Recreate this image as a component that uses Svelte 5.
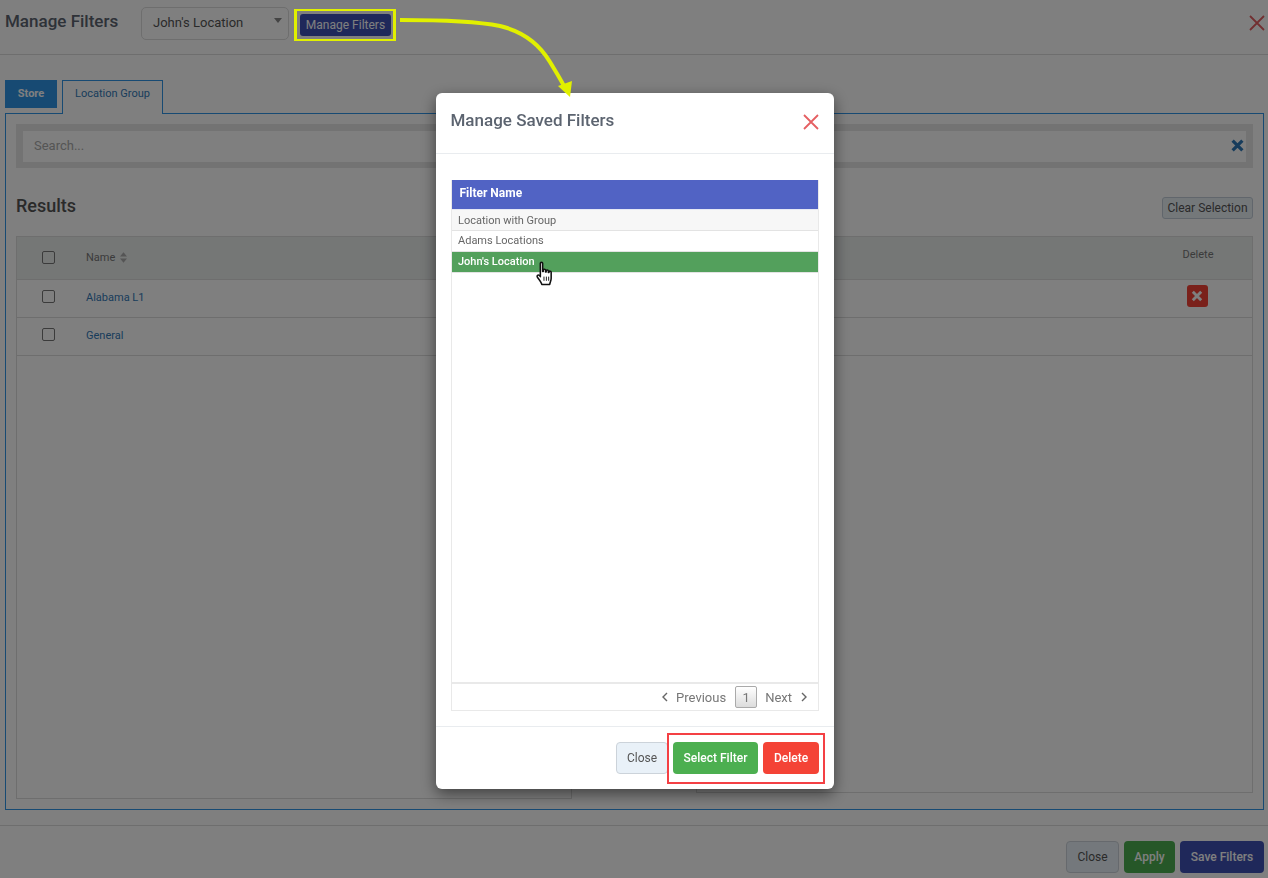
<script>
	const rows = [
		{ name: 'Alabama L1', canDelete: true },
		{ name: 'General', canDelete: false }
	];
	const filters = ['Location with Group', 'Adams Locations', "John's Location"];
	const selected = "John's Location";
</script>

<div class="page">
	<header class="top">
		<h1>Manage Filters</h1>
		<div class="select">
			<span>John's Location</span>
			<i class="caret"></i>
		</div>
		<button class="btn navy small">Manage Filters</button>
		<svg class="top-close" viewBox="0 0 16 16"><path d="M1 1L15 15M15 1L1 15" /></svg>
	</header>

	<main class="content">
		<div class="tabs">
			<div class="tab store">Store</div>
			<div class="tab active">Location Group</div>
		</div>
		<section class="panel">
			<div class="search-wrap">
				<div class="search">
					<span>Search...</span>
					<svg viewBox="0 0 12 12"><path d="M1.5 1.5L10.5 10.5M10.5 1.5L1.5 10.5" /></svg>
				</div>
			</div>
			<div class="results-head">
				<h2>Results</h2>
				<button class="clear">Clear Selection</button>
			</div>
			<div class="table">
				<div class="row head">
					<div class="check"><i class="box"></i></div>
					<div class="name">
						Name
						<svg class="sort" viewBox="0 0 8 12"><path d="M4 0L8 4.8H0zM4 12L0 7.2H8z" /></svg>
					</div>
					<div class="del">Delete</div>
				</div>
				{#each rows as row}
					<div class="row">
						<div class="check"><i class="box"></i></div>
						<div class="name link">{row.name}</div>
						<div class="del">
							{#if row.canDelete}
								<span class="del-btn">
									<svg viewBox="0 0 10 10"><path d="M1.5 1.5L8.5 8.5M8.5 1.5L1.5 8.5" /></svg>
								</span>
							{/if}
						</div>
					</div>
				{/each}
				<div class="table-foot">
					<div class="pane-left"></div>
					<div class="pane-right"></div>
				</div>
			</div>
		</section>
	</main>

	<footer class="bottom">
		<button class="btn light">Close</button>
		<button class="btn green">Apply</button>
		<button class="btn navy wide">Save Filters</button>
	</footer>
</div>

<div class="backdrop"></div>

<div class="modal">
	<div class="modal-head">
		<h3>Manage Saved Filters</h3>
		<svg viewBox="0 0 16 16"><path d="M1 1L15 15M15 1L1 15" /></svg>
	</div>
	<div class="modal-body">
		<div class="list">
			<div class="list-head">Filter Name</div>
			<div class="list-rows">
				{#each filters as f, i}
					<div class="item" class:odd={i === 0} class:sel={f === selected}>{f}</div>
				{/each}
			</div>
			<div class="pager">
				<svg viewBox="0 0 6 10"><path d="M5 1L1 5L5 9" /></svg>
				<span class="prev">Previous</span>
				<span class="num">1</span>
				<span class="next">Next</span>
				<svg viewBox="0 0 6 10"><path d="M1 1L5 5L1 9" /></svg>
			</div>
		</div>
	</div>
	<div class="modal-foot">
		<button class="btn pale">Close</button>
		<button class="btn green select-filter">Select Filter</button>
		<button class="btn red">Delete</button>
	</div>
</div>

<!-- annotations drawn over the screenshot -->
<div class="mark yellow"></div>
<div class="mark redbox"></div>
<svg class="arrow" viewBox="0 0 1268 878">
	<path d="M400 20C440 20 475 21 500 26C525 32 540 45 550 62C556 72 560 78 565 88" fill="none" stroke="#e1f000" stroke-width="4" />
	<path d="M558 86L572 81L570 97Z" fill="#e1f000" />
</svg>
<svg class="hand" viewBox="0 0 18 24">
	<path d="M5 2.2C5 1 7.2 1 7.2 2.2V10L7.8 10V8.6C8 7.6 9.9 7.6 10 8.8V10.6L10.6 10.6V9.4C10.8 8.4 12.6 8.4 12.7 9.6V11L13.3 11V10.4C13.5 9.4 15.4 9.6 15.4 10.8V16.5C15.4 19 14.4 20 14 22.5H6.4C6 20.4 4.4 18.4 2.2 15.6C1.2 14 2.8 12.6 4.2 14L5 15Z" fill="#fff" stroke="#111" stroke-width="1.5" stroke-linejoin="round" />
	<path d="M8.5 15V19M10.8 15V19M13 15V19" stroke="#111" stroke-width="0.9" fill="none" />
</svg>

<style>
	:global(body) {
		margin: 0;
		background: #fff;
		font-family: Roboto, 'Liberation Sans', sans-serif;
	}

	.page {
		width: 1268px;
		height: 878px;
		display: flex;
		flex-direction: column;
		overflow: hidden;
		color: #333;
	}

	.top {
		height: 54px;
		flex: none;
		display: flex;
		align-items: flex-start;
		border-bottom: 1px solid #dcdcdc;
		padding-left: 5px;
		box-sizing: content-box;
		position: relative;
	}

	h1 {
		margin: 11px 23px 0 0;
		width: 113px;
		font-size: 17px;
		line-height: 20px;
		font-weight: 500;
		color: #5c6470;
		white-space: nowrap;
	}

	.select {
		width: 148px;
		height: 33px;
		margin-top: 7px;
		box-sizing: border-box;
		border: 1px solid #dcdcdc;
		border-radius: 5px;
		display: flex;
		align-items: center;
		justify-content: space-between;
		padding: 0 5px 2px 11px;
		font-size: 13px;
		color: #555;
	}

	.caret {
		width: 0;
		height: 0;
		border-left: 4px solid transparent;
		border-right: 4px solid transparent;
		border-top: 5px solid #888;
		margin-right: 1px;
		margin-bottom: 5px;
	}

	.btn {
		font-family: inherit;
		font-size: 12px;
		font-weight: 500;
		border-radius: 4px;
		border: 1px solid transparent;
		box-sizing: border-box;
		height: 32px;
		padding: 0;
		color: #fff;
	}

	.btn.small {
		width: 91px;
		height: 22px;
		margin: 14px 0 0 11px;
		font-weight: 400;
		border-radius: 3px;
	}

	.navy {
		background: #3f51b5;
	}

	.top-close {
		position: absolute;
		right: 3px;
		top: 15px;
		width: 16px;
		height: 16px;
	}

	.top-close path,
	.modal-head path {
		fill: none;
		stroke: #e55f62;
		stroke-width: 1.8;
	}

	.content {
		flex: none;
		height: 755px;
		padding: 25px 4px 0 5px;
		box-sizing: border-box;
		display: flex;
		flex-direction: column;
	}

	.tabs {
		display: flex;
		gap: 5px;
		height: 33px;
		flex: none;
	}

	.tab {
		font-size: 11px;
		font-weight: 500;
		display: flex;
		align-items: center;
		justify-content: center;
		box-sizing: border-box;
	}

	.tab.store {
		width: 52px;
		height: 28px;
		background: #2f94e6;
		color: #fff;
		font-weight: 700;
		padding-bottom: 1px;
	}

	/* sits over the panel's top border so the tab opens into it */
	.tab.active {
		width: 101px;
		height: 34px;
		background: #fff;
		color: #337ab7;
		border: 1px solid #2f94e6;
		border-bottom: 0;
		padding-bottom: 8px;
		font-weight: 400;
		position: relative;
	}

	.panel {
		flex: none;
		height: 697px;
		box-sizing: border-box;
		border: 1px solid #2f94e6;
		padding: 10px 10px 10px;
		display: flex;
		flex-direction: column;
	}

	.search-wrap {
		background: #e6e6e6;
		padding: 6px 6px 5px;
		height: 44px;
		box-sizing: border-box;
		flex: none;
	}

	.search {
		height: 33px;
		box-sizing: border-box;
		background: #fff;
		border: 1px solid #e6e6e6;
		display: flex;
		align-items: center;
		justify-content: space-between;
		padding: 0 2px 2px 11px;
		font-size: 13px;
		color: #aaa;
	}

	.search svg {
		width: 13px;
		height: 13px;
	}

	.search path {
		stroke: #2f79b8;
		stroke-width: 3;
		fill: none;
	}

	.results-head {
		display: flex;
		justify-content: space-between;
		align-items: center;
		height: 68px;
		flex: none;
		padding-top: 8px;
		box-sizing: border-box;
	}

	h2 {
		margin: 0 0 2px;
		font-size: 18px;
		font-weight: 500;
		color: #555;
	}

	.clear {
		width: 91px;
		height: 22px;
		font-family: inherit;
		font-size: 12px;
		color: #555;
		background: #e9f0f5;
		border: 1px solid #c2cdd8;
		border-radius: 3px;
		padding: 0;
		margin-top: 4px;
	}

	.table {
		flex: 1;
		border-top: 1px solid #dcdcdc;
		font-size: 11px;
		display: flex;
		flex-direction: column;
	}

	.row {
		display: flex;
		align-items: center;
		height: 38px;
		flex: none;
		box-sizing: border-box;
		border: 1px solid #dcdcdc;
		border-width: 0 1px 1px;
		padding-bottom: 2px;
	}

	.row.head {
		height: 43px;
		background: #eaeeed;
		color: #777;
	}

	.check {
		width: 69px;
		padding-left: 25px;
		box-sizing: border-box;
		display: flex;
		margin-bottom: 2px;
	}

	.head .check {
		margin-bottom: 0;
	}

	.box {
		width: 13px;
		height: 13px;
		border: 1px solid #777;
		border-radius: 2px;
		background: #fff;
		box-sizing: border-box;
	}

	.head .box {
		background: transparent;
	}

	.name {
		flex: 1;
		display: flex;
		align-items: center;
		gap: 5px;
	}

	.link {
		color: #337ab7;
	}

	.sort {
		width: 7px;
		height: 11px;
		fill: #aaa;
	}

	.del {
		width: 110px;
		text-align: center;
		padding-left: 2px;
		box-sizing: border-box;
	}

	.head .del {
		padding-bottom: 5px;
	}

	.del-btn {
		display: inline-flex;
		align-items: center;
		justify-content: center;
		width: 21px;
		height: 22px;
		background: #f44336;
		border-radius: 3px;
		margin: 0 2px 4px 0;
	}

	.del-btn svg {
		width: 12px;
		height: 12px;
	}

	.del-btn path {
		stroke: #fff;
		stroke-width: 2.4;
		fill: none;
	}

	.table-foot {
		flex: 1;
		display: flex;
		justify-content: space-between;
		align-items: flex-start;
	}

	.pane-left,
	.pane-right {
		box-sizing: border-box;
		border: 1px solid #dcdcdc;
		border-top: 0;
	}

	.pane-left {
		width: 556px;
		height: 100%;
	}

	.pane-right {
		width: 557px;
		height: calc(100% - 6px);
	}

	.bottom {
		flex: none;
		height: 68px;
		display: flex;
		justify-content: flex-end;
		align-items: flex-start;
		gap: 5px;
		border-top: 1px solid #dcdcdc;
		padding: 15px 4px 0 0;
		margin-top: 15px;
		box-sizing: border-box;
	}

	.light {
		width: 53px;
		background: #e9f1f8;
		border-color: #ccd3da;
		color: #555;
		font-weight: 400;
	}

	.green {
		width: 51px;
		background: #4caf50;
	}

	.wide {
		width: 84px;
	}

	.backdrop {
		position: fixed;
		inset: 0;
		background: rgba(0, 0, 0, 0.5);
	}

	.modal {
		position: fixed;
		left: 436px;
		top: 93px;
		width: 398px;
		height: 696px;
		background: #fff;
		border-radius: 6px;
		box-shadow: 0 5px 15px rgba(0, 0, 0, 0.5);
		display: flex;
		flex-direction: column;
	}

	.modal-head {
		height: 61px;
		flex: none;
		box-sizing: border-box;
		border-bottom: 1px solid #e9ecef;
		display: flex;
		justify-content: space-between;
		padding: 17px 15px 0 14.5px;
	}

	h3 {
		margin: 0;
		font-size: 17px;
		line-height: 20px;
		font-weight: 500;
		color: #5c6470;
	}

	.modal-head svg {
		width: 16px;
		height: 16px;
		margin-top: 4px;
	}

	.modal-body {
		flex: none;
		height: 573px;
		box-sizing: border-box;
		padding: 26px 15px 15px;
		border-bottom: 1px solid #e9ecef;
	}

	.list {
		height: 100%;
		box-sizing: border-box;
		display: flex;
		flex-direction: column;
		border: 1px solid #e9e9e9;
		border-top: 0;
		font-size: 11px;
		color: #666;
	}

	.list-head {
		height: 30px;
		flex: none;
		background: #5163c4;
		color: #fff;
		font-size: 12px;
		font-weight: 700;
		display: flex;
		align-items: center;
		padding: 0 0 4px 7.5px;
		box-sizing: border-box;
		border-bottom: 1px solid #e6e8f4;
	}

	.list-rows {
		flex: 1;
	}

	.item {
		height: 21px;
		box-sizing: border-box;
		border-bottom: 1px solid #e3e3e3;
		padding-left: 6px;
		display: flex;
		align-items: center;
	}

	.item + .item {
		padding-bottom: 2px;
	}

	.item.odd {
		background: #f7f7f7;
	}

	.item.sel {
		background: #53a05c;
		color: #fff;
		font-weight: 500;
	}

	.pager {
		height: 28px;
		flex: none;
		box-sizing: border-box;
		border-top: 2px solid #e9e9e9;
		display: flex;
		align-items: center;
		justify-content: flex-end;
		padding-right: 11px;
		font-size: 13px;
		color: #777;
	}

	.pager svg {
		width: 6px;
		height: 10px;
	}

	.pager path {
		fill: none;
		stroke: #666;
		stroke-width: 1.4;
	}

	.prev {
		margin: 0 9px 0 8px;
	}

	.next {
		margin: 0 9px 0 8px;
	}

	.num {
		width: 22px;
		height: 22px;
		box-sizing: border-box;
		display: flex;
		align-items: center;
		justify-content: center;
		border: 1px solid #aaa;
		border-radius: 2px;
		background: linear-gradient(#fff, #dcdcdc);
	}

	.modal-foot {
		flex: 1;
		display: flex;
		justify-content: flex-end;
		align-items: flex-start;
		gap: 5px;
		padding: 15px 15px 0 0;
	}

	.pale {
		width: 52px;
		background: #e9f1f8;
		border-color: #ccd3da;
		color: #555;
		font-weight: 400;
	}

	.green.select-filter {
		width: 85px;
	}

	.red {
		width: 56px;
		background: #f44336;
	}

	.mark {
		position: fixed;
		box-sizing: border-box;
	}

	.yellow {
		left: 294px;
		top: 9px;
		width: 102px;
		height: 32px;
		border: solid #e1f000;
		border-width: 2px 3px;
	}

	.redbox {
		left: 667px;
		top: 733px;
		width: 158px;
		height: 51px;
		border: 2px solid #f44044;
	}

	.arrow {
		position: fixed;
		left: 0;
		top: 0;
		width: 1268px;
		height: 878px;
		pointer-events: none;
	}

	.hand {
		position: fixed;
		left: 535px;
		top: 261px;
		width: 19px;
		height: 25px;
	}
</style>
